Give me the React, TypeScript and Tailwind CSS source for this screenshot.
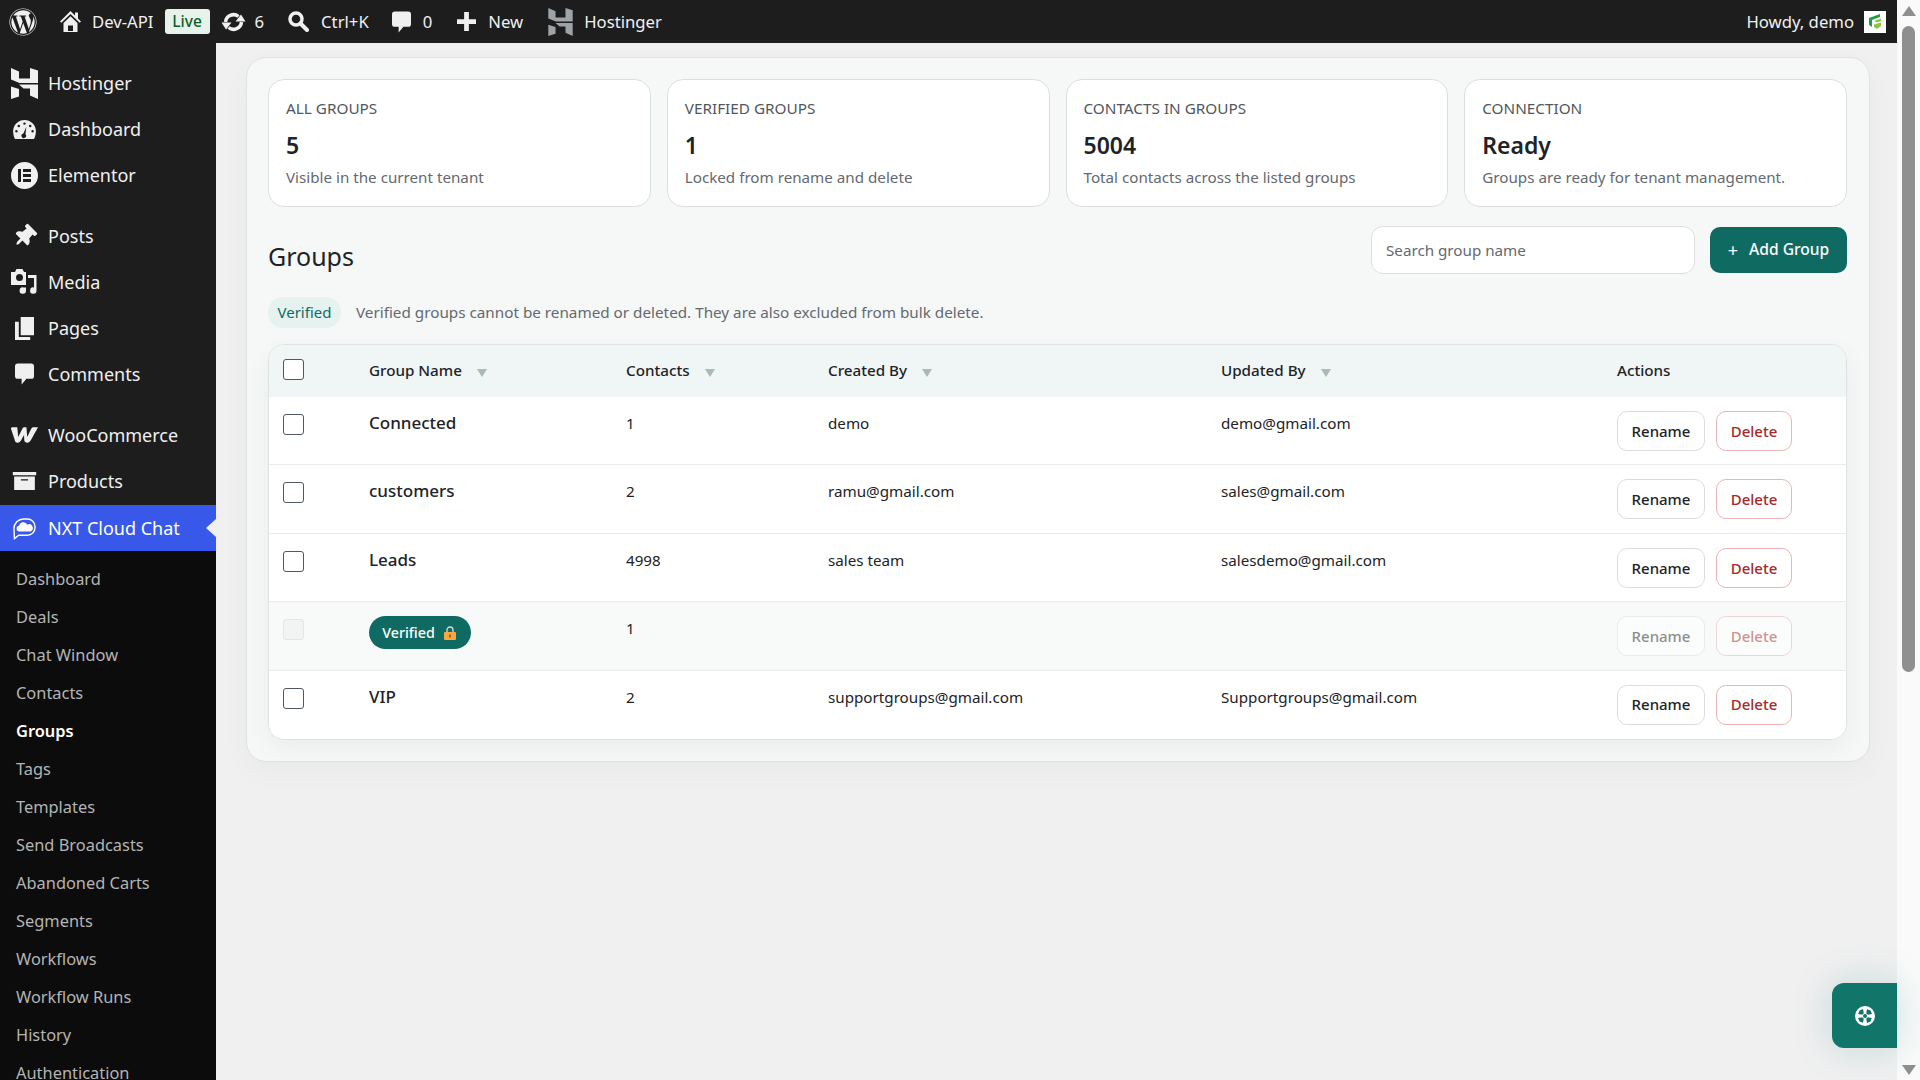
import { FaWordpress, FaThumbtack } from 'react-icons/fa';

const HostingerIcon = ({ className }: { className: string }) => (
  <svg viewBox="0 0 27 31" className={className} fill="currentColor">
    <path d="M0 0l8 3.500V10.500h11V0l8 2.500V15H8.500L0 11.500z" />
    <path d="M0 18.500l8 2.500V28.500l-8 2.500zM8 16.500h19V31l-8-3.500V20.500H12.500z" />
  </svg>
);

const HomeIcon = () => (
  <svg viewBox="0 0 21 21" className="w-[21px] h-[21px]" fill="currentColor">
    <path d="M10.500 0L21 10.500l-1.300 1.300L10.500 3 1.300 11.800 0 10.500zM15 1.500h3v6.200l-3-3z" />
    <path fillRule="evenodd" d="M3.500 12l7-6.700 7 6.700v9h-14zM8 14.500V20h5v-5.500z" />
  </svg>
);

const UpdateIcon = () => (
  <svg viewBox="0 0 24 20" className="w-[25px] h-[20px]" fill="currentColor">
    <path d="M4 10A8 8 0 0 1 17 4.500" fill="none" stroke="currentColor" strokeWidth="3.500" />
    <path d="M20 10A8 8 0 0 1 7 15.500" fill="none" stroke="currentColor" strokeWidth="3.500" />
    <path d="M24 9.500H14L19.500 2.500zM0 10.500h10L4.500 17.500z" />
  </svg>
);

const SearchIcon = () => (
  <svg viewBox="0 0 21 21" className="w-[21px] h-[21px]" fill="none" stroke="currentColor">
    <circle cx="8" cy="8" r="6" strokeWidth="3.500" />
    <path d="M12.500 12.500L19 19" strokeWidth="4" strokeLinecap="round" />
  </svg>
);

const CommentIcon = ({ className }: { className: string }) => (
  <svg viewBox="0 0 20 22" className={className} fill="currentColor">
    <path d="M3 0h14a3 3 0 0 1 3 3v10a3 3 0 0 1-3 3h-5l-5 6v-6H3a3 3 0 0 1-3-3V3a3 3 0 0 1 3-3z" />
  </svg>
);

const PlusIcon = () => (
  <svg viewBox="0 0 20 20" className="w-[19px] h-[19px]" fill="currentColor">
    <path d="M7.500 0h5v7.500H20v5h-7.500V20h-5v-7.500H0v-5h7.500z" />
  </svg>
);

const GaugeIcon = () => (
  <svg viewBox="0 0 24 20" className="w-[23px] h-[19px]" fill="currentColor">
    <path fillRule="evenodd" d="M12 0a12 12 0 0 1 12 12c0 3-1 6-2 8H2C1 18 0 15 0 12A12 12 0 0 1 12 0zM12 2.500a1.300 1.300 0 1 0 0 2.600 1.300 1.300 0 0 0 0-2.600zM6 5a1.300 1.300 0 1 0 0 2.600A1.300 1.300 0 0 0 6 5zM18 5a1.300 1.300 0 1 0 0 2.600A1.300 1.300 0 0 0 18 5zM3.500 10.500a1.300 1.300 0 1 0 0 2.600 1.300 1.300 0 0 0 0-2.600zM20.500 10.500a1.300 1.300 0 1 0 0 2.600 1.300 1.300 0 0 0 0-2.600zM14 7l-3.200 7.300a2.400 2.400 0 1 0 2.200.8z" />
  </svg>
);

const ElementorIcon = () => (
  <svg viewBox="0 0 27 27" className="w-[27px] h-[27px]" fill="currentColor">
    <path fillRule="evenodd" d="M13.500 0a13.500 13.500 0 1 1 0 27 13.500 13.500 0 0 1 0-27zM7 7v13h3V7zM12 7v3h8V7zM12 12v3h8v-3zM12 17v3h8v-3z" />
  </svg>
);

const MediaIcon = () => (
  <svg viewBox="0 0 26 26" className="w-[26px] h-[26px]" fill="currentColor">
    <path fillRule="evenodd" d="M4 3l1.500-3h6L13 3h2v13H0V3zM8.500 5a3.500 3.500 0 1 0 0 7 3.500 3.500 0 0 0 0-7z" />
    <path d="M17 6h8.500v15.500a3.200 3.200 0 1 1-2.500-3V9h-6zM15 18.500v3a3.200 3.200 0 1 1-2.500-3z" />
  </svg>
);

const PagesIcon = () => (
  <svg viewBox="0 0 20 24" className="w-[19px] h-[23px]" fill="currentColor">
    <path d="M6 0h14v19H6zM0 5h4v16h12v3H0z" />
  </svg>
);

const WooIcon = () => (
  <svg viewBox="0 0 28 16" className="w-[27px] h-[16px]" fill="currentColor">
    <path d="M0 1.500C0 .5.800 0 2 0h4.500l1 10L12 1c.5-.8 1.200-1 2-1h2l.800 10L21 1.500C21.500.5 22.500 0 23.500 0H28c-2 4-5 9-7.500 13.500-1 1.800-2 2.500-3.500 2.500-2 0-3-.8-3.200-2.500L13.500 8l-3 5.500C9.500 15.300 8.500 16 7 16c-2 0-3-1-3.200-3z" />
  </svg>
);

const BoxIcon = () => (
  <svg viewBox="0 0 26 20" className="w-[25px] h-[18px]" fill="currentColor">
    <path fillRule="evenodd" d="M0 0h26v3.500H0zM1.500 5h23v15h-23zM9 8v1.500h8V8z" />
  </svg>
);

const ChatIcon = () => (
  <svg viewBox="0 0 24 24" className="w-[23px] h-[23px]" fill="none" stroke="currentColor" strokeWidth="1.500">
    <path d="M1 12a10 10 0 0 1 10-10h4a8 8 0 0 1 8 8v1a8 8 0 0 1-8 8H6l-4.500 3.500z" />
    <path fill="currentColor" stroke="none" d="M7 15a3 3 0 0 1-.5-6 4.500 4.500 0 0 1 8.500-1 3.600 3.600 0 0 1 3.500 7z" />
  </svg>
);

const LifeRingIcon = () => (
  <svg viewBox="0 0 20 20" className="w-5 h-5">
    <circle cx="10" cy="10" r="10" fill="#ffffff" />
    <path d="M4.500 4.500l3.500-1.500 .8 4.200-1.600 1.600-4-.8zM15.500 4.500l1.500 3.500-4.200.8-1.600-1.600.8-4zM4.500 15.500l-1.500-3.500 4.200-.8 1.600 1.600-.8 4zM15.500 15.500l-3.500 1.500-.8-4.200 1.600-1.600 4 .8z" fill="#11756a" />
    <circle cx="10" cy="10" r="2" fill="#11756a" />
  </svg>
);

const mainMenu = [
  { label: 'Hostinger', icon: <HostingerIcon className="w-[27px] h-[31px]" /> },
  { label: 'Dashboard', icon: <GaugeIcon /> },
  { label: 'Elementor', icon: <ElementorIcon /> },
  { label: 'Posts', icon: <FaThumbtack className="w-[23px] h-[23px] rotate-45" />, gap: true },
  { label: 'Media', icon: <MediaIcon /> },
  { label: 'Pages', icon: <PagesIcon /> },
  { label: 'Comments', icon: <CommentIcon className="w-[19px] h-[22px]" /> },
  { label: 'WooCommerce', icon: <WooIcon />, gap: true },
  { label: 'Products', icon: <BoxIcon /> },
];

const subMenu = ['Dashboard', 'Deals', 'Chat Window', 'Contacts', 'Groups', 'Tags', 'Templates', 'Send Broadcasts', 'Abandoned Carts', 'Segments', 'Workflows', 'Workflow Runs', 'History', 'Authentication'];

const stats = [
  { label: 'ALL GROUPS', value: '5', note: 'Visible in the current tenant' },
  { label: 'VERIFIED GROUPS', value: '1', note: 'Locked from rename and delete' },
  { label: 'CONTACTS IN GROUPS', value: '5004', note: 'Total contacts across the listed groups' },
  { label: 'CONNECTION', value: 'Ready', note: 'Groups are ready for tenant management.' },
];

const rows = [
  { name: 'Connected', contacts: '1', created: 'demo', updated: 'demo@gmail.com' },
  { name: 'customers', contacts: '2', created: 'ramu@gmail.com', updated: 'sales@gmail.com' },
  { name: 'Leads', contacts: '4998', created: 'sales team', updated: 'salesdemo@gmail.com' },
  { name: '', contacts: '1', created: '', updated: '', verified: true },
  { name: 'VIP', contacts: '2', created: 'supportgroups@gmail.com', updated: 'Supportgroups@gmail.com' },
];

function SortHead({ label }: { label: string }) {
  return (
    <div className="mb-[2px] flex items-center gap-[15px] text-[15.2px] font-medium text-[#1d2327]">
      {label}
      <span className="mt-[6px] h-0 w-0 border-x-[5px] border-t-[8px] border-x-transparent border-t-[#a9bab6]" />
    </div>
  );
}

function GroupRow({ row }: { row: (typeof rows)[number] }) {
  return (
    <div className={`grid grid-cols-[100px_257px_202px_393px_396px_1fr] h-[68.4px] border-b border-[#e9ecec] last:border-b-0 text-[15.2px] text-[#1d2327] ${row.verified ? 'bg-[#f8faf9]' : 'bg-white'}`}>
      <div className="pl-[14px] pt-[17px]">
        <div className={`w-[21px] h-[21px] rounded-[3px] border ${row.verified ? 'border-[#e3e6e6] bg-[#f2f3f3]' : 'border-[#50575e] bg-white'}`} />
      </div>
      <div className="pt-[14px]">
        {row.verified ? (
          <span className="inline-flex h-[33px] w-[102px] items-center justify-center gap-[9px] rounded-full bg-[#0f6b62] pr-[2px] text-[14.3px] font-medium text-white">
            Verified
            <svg viewBox="0 0 12 14" className="w-[12px] h-[14px]">
              <path d="M3 6V4a3 3 0 0 1 6 0v2" fill="none" stroke="#d9d9d9" strokeWidth="1.300" />
              <rect y="6" width="12" height="8" rx="1" fill="#f5a940" />
              <rect x="5.300" y="8.500" width="1.400" height="3" fill="#7a4a10" />
            </svg>
          </span>
        ) : (
          <span className="block pt-[1px] text-[17px] font-medium leading-[22px]">{row.name}</span>
        )}
      </div>
      <div className="pt-[15px] leading-[22px]">{row.contacts}</div>
      <div className="pt-[15px] leading-[22px]">{row.created}</div>
      <div className="pt-[15px] leading-[22px]">{row.updated}</div>
      <div className={`flex gap-[11px] pt-[14px] text-[15px] font-medium ${row.verified ? 'opacity-50' : ''}`}>
        <button className="h-[40px] w-[88px] rounded-[10px] border border-[#d9dddd] bg-white text-[#1d2327]">Rename</button>
        <button className="h-[40px] w-[76px] rounded-[10px] border border-[#e8b4b4] bg-white text-[#a52a2a]">Delete</button>
      </div>
    </div>
  );
}

export default function App() {
  return (
    <div className="relative flex h-screen flex-col overflow-hidden bg-[#f0f0f1] font-['Noto_Sans',sans-serif]">
      <div className="flex flex-1 min-h-0">
        <div className="flex flex-1 min-w-0 flex-col">
          {/* Admin bar */}
          <header className="flex h-[43px] shrink-0 items-center bg-[#1d1d1d] text-[16.7px] text-[#f0f0f1]">
            <FaWordpress className="ml-[9px] h-[28px] w-[28px]" />
            <span className="ml-[23px]"><HomeIcon /></span>
            <span className="ml-[11px]">Dev-API</span>
            <span className="ml-[11px] flex h-[25px] w-[45px] items-center justify-center rounded-[3px] bg-[#e7f3ea] text-[15.5px] font-medium text-[#0d5c2a]">Live</span>
            <span className="ml-[11px]"><UpdateIcon /></span>
            <span className="ml-[9px]">6</span>
            <span className="ml-[24px]"><SearchIcon /></span>
            <span className="ml-[12px]">Ctrl+K</span>
            <span className="ml-[23px]"><CommentIcon className="h-[22px] w-[19px]" /></span>
            <span className="ml-[12px]">0</span>
            <span className="ml-[25px]"><PlusIcon /></span>
            <span className="ml-[12px]">New</span>
            <span className="ml-[25px] text-[#9ea3a8]"><HostingerIcon className="h-[28px] w-[25px]" /></span>
            <span className="ml-[11px]">Hostinger</span>
            <span className="ml-auto">Howdy, demo</span>
            <span className="ml-[10px] mr-[11px] flex h-[22px] w-[22px] items-center justify-center bg-white">
              <svg viewBox="0 0 16 18" className="h-[18px] w-[16px]">
                <path d="M2 5l11-4v3L5 7v7l-3-2z" fill="#1e9e4a" />
                <path d="M7 8l7-2.500V8l-4 1.500zM7 11.500l7-2V13l-4 3-3-2z" fill="#8cc63f" />
              </svg>
            </span>
          </header>

          <div className="flex flex-1 min-h-0">
            {/* Sidebar */}
            <aside className="w-[216px] shrink-0 overflow-hidden bg-[#1d1d1d] pt-[17px]">
              {mainMenu.map((item) => (
                <div key={item.label} className={`flex h-[46px] items-center text-[#f0f0f1] text-[18px] ${item.gap ? 'mt-[15px]' : ''}`}>
                  <span className="flex w-[48px] justify-center">{item.icon}</span>
                  {item.label}
                </div>
              ))}
              <div className="relative mt-[1px] flex h-[46px] items-center bg-[#3858e9] text-[18px] text-white">
                <span className="flex w-[48px] justify-center"><ChatIcon /></span>
                NXT Cloud Chat
                <span className="absolute right-0 top-[14px] h-0 w-0 border-y-[9px] border-r-[10px] border-y-transparent border-r-[#f0f0f1]" />
              </div>
              <div className="bg-[#0c0c0c] pt-[9px] pb-[40px]">
                {subMenu.map((item) => (
                  <div key={item} className={`flex h-[38px] items-center pl-[16px] text-[16.4px] ${item === 'Groups' ? 'font-semibold text-white' : 'text-[#b4b4b4]'}`}>{item}</div>
                ))}
              </div>
            </aside>

            {/* Page */}
            <main className="flex-1 min-w-0 pl-[30px] pr-[27px] pt-[14px]">
              <div className="rounded-[20px] border border-[#dfe2e2] bg-[#f6f7f7] pl-[21px] pr-[22px] pt-[21px] pb-[21px] shadow-[0_10px_30px_rgba(15,40,40,0.03)]">
                <div className="grid grid-cols-4 gap-[16px]">
                  {stats.map((s) => (
                    <div key={s.label} className="h-[128px] rounded-[16px] border border-[#dcdfe0] bg-white pl-[17px] pt-[17px]">
                      <div className="text-[15.3px] leading-[22px] text-[#50575e]">{s.label}</div>
                      <div className="mt-[10px] text-[23px] font-semibold leading-[32px] text-[#1d2327]">{s.value}</div>
                      <div className="mt-[6px] text-[15.2px] leading-[20px] text-[#646970]">{s.note}</div>
                    </div>
                  ))}
                </div>

                <div className="mt-[19px] flex h-[48px] items-center">
                  <h1 className="mt-[11px] text-[25px] leading-[32px] text-[#1d2327]">Groups</h1>
                  <div className="ml-auto flex h-[48px] w-[324px] items-center rounded-[12px] border border-[#dcdfe0] bg-white pl-[14px] text-[15.2px] text-[#646970]">Search group name</div>
                  <button className="ml-[15px] flex h-[46px] w-[137px] items-center justify-center gap-[11px] rounded-[10px] bg-[#0f6b62] text-[15.6px] font-medium text-white">
                    <span className="text-[18px] font-normal leading-none">+</span>
                    Add Group
                  </button>
                </div>

                <div className="mt-[23px] flex items-center">
                  <span className="flex h-[31px] w-[73px] items-center justify-center rounded-full bg-[#e5f2ef] text-[15px] text-[#0f6b62]">Verified</span>
                  <span className="ml-[15px] text-[15.25px] text-[#646970]">Verified groups cannot be renamed or deleted. They are also excluded from bulk delete.</span>
                </div>

                <div className="mt-[16px] overflow-hidden rounded-[16px] border border-[#dfe2e2] bg-white shadow-[0_8px_24px_rgba(15,40,40,0.05)]">
                  <div className="grid h-[52px] grid-cols-[100px_257px_202px_393px_396px_1fr] items-center bg-[#f0f5f5]">
                    <div className="pl-[14px]"><div className="mb-[3px] h-[21px] w-[21px] rounded-[3px] border border-[#50575e] bg-white" /></div>
                    <SortHead label="Group Name" />
                    <SortHead label="Contacts" />
                    <SortHead label="Created By" />
                    <SortHead label="Updated By" />
                    <div className="mb-[2px] text-[15.2px] font-medium text-[#1d2327]">Actions</div>
                  </div>
                  {rows.map((row, i) => <GroupRow key={i} row={row} />)}
                </div>
              </div>
            </main>
          </div>
        </div>

        {/* Scrollbar */}
        <div className="flex w-[23px] shrink-0 flex-col items-center bg-[#fafafa] pt-[6px]">
          <span className="h-0 w-0 border-x-[7px] border-b-[10px] border-x-transparent border-b-[#8f8f8f]" />
          <div className="mt-[10px] h-[646px] w-[13px] rounded-full bg-[#8f8f8f]" />
          <span className="mt-auto mb-[5px] h-0 w-0 border-x-[7px] border-t-[10px] border-x-transparent border-t-[#8f8f8f]" />
        </div>
      </div>

      {/* Floating support button */}
      <button className="absolute right-[23px] top-[983px] flex h-[65px] w-[65px] items-center justify-center rounded-l-[12px] bg-[#11756a] shadow-[0_0_40px_rgba(17,117,106,0.2)]">
        <LifeRingIcon />
      </button>
    </div>
  );
}
